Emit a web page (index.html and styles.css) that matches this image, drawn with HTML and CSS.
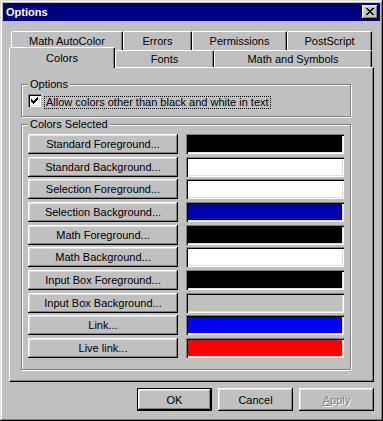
FILE: index.html
```html
<!DOCTYPE html>
<html>
<head>
<meta charset="utf-8">
<title>Options</title>
<link rel="stylesheet" href="styles.css">
</head>
<body>
<div class="window">
  <div class="titlebar">
    <span class="title">Options</span>
    <div class="close">
      <svg width="8" height="7" viewBox="0 0 8 7" shape-rendering="crispEdges"><path d="M0 0h2v1h-2zM6 0h2v1h-2zM1 1h2v1h-2zM5 1h2v1h-2zM2 2h4v1h-4zM3 3h2v1h-2zM2 4h4v1h-4zM1 5h2v1h-2zM5 5h2v1h-2zM0 6h2v1h-2zM6 6h2v1h-2z" fill="#000"/></svg>
    </div>
  </div>
  <div class="body">
    <div class="tabs-back">
      <div class="tab w-autocolor">Math AutoColor</div>
      <div class="tab w-errors">Errors</div>
      <div class="tab w-perm">Permissions</div>
      <div class="tab w-post">PostScript</div>
    </div>
    <div class="tabs-front">
      <div class="tab sel w-colors">Colors</div>
      <div class="tab w-fonts">Fonts</div>
      <div class="tab w-math">Math and Symbols</div>
    </div>
    <div class="panel">
      <div class="group group-opts">
        <span class="group-label">Options</span>
        <div class="check-row">
          <span class="checkbox">
            <svg width="7" height="7" viewBox="0 0 7 7" shape-rendering="crispEdges"><path d="M6 0h1v1h-1zM5 1h2v1h-2zM0 2h1v1h-1zM4 2h3v1h-3zM0 3h2v1h-2zM3 3h3v1h-3zM0 4h5v1h-5zM1 5h3v1h-3zM2 6h1v1h-1z" fill="#000"/></svg>
          </span>
          <span class="check-label">Allow colors other than black and white in text</span>
        </div>
      </div>
      <div class="group group-colors">
        <span class="group-label">Colors Selected</span>
        <div class="color-grid">
          <div class="btn">Standard Foreground...</div><div class="swatch c-black"></div>
          <div class="btn">Standard Background...</div><div class="swatch c-white"></div>
          <div class="btn">Selection Foreground...</div><div class="swatch c-white"></div>
          <div class="btn">Selection Background...</div><div class="swatch c-navy"></div>
          <div class="btn">Math Foreground...</div><div class="swatch c-black"></div>
          <div class="btn">Math Background...</div><div class="swatch c-white"></div>
          <div class="btn">Input Box Foreground...</div><div class="swatch c-black"></div>
          <div class="btn">Input Box Background...</div><div class="swatch c-gray"></div>
          <div class="btn">Link...</div><div class="swatch c-blue"></div>
          <div class="btn">Live link...</div><div class="swatch c-red"></div>
        </div>
      </div>
    </div>
    <div class="footer">
      <div class="btn fbtn default">OK</div>
      <div class="btn fbtn">Cancel</div>
      <div class="btn fbtn disabled"><span><u>A</u>pply</span></div>
    </div>
  </div>
</div>
</body>
</html>
```
FILE: styles.css
```css
* { box-sizing: border-box; }
html, body { margin: 0; padding: 0; }
body {
  background: #c0c0c0;
  font-family: "Liberation Sans", Arial, sans-serif;
  font-size: 11px;
  color: #000;
}
.window {
  width: 383px;
  height: 421px;
  padding: 3px;
  background: #c0c0c0;
  box-shadow: inset -1px -1px #000, inset 1px 1px #dfdfdf, inset -2px -2px #808080, inset 2px 2px #fff;
  display: flex;
  flex-direction: column;
}
.titlebar {
  height: 18px;
  background: #000080;
  color: #fff;
  font-weight: bold;
  display: flex;
  align-items: center;
  justify-content: space-between;
  padding: 0 2px 0 3px;
}
.close {
  width: 16px;
  height: 14px;
  background: #c0c0c0;
  box-shadow: inset -1px -1px #000, inset 1px 1px #fff, inset -2px -2px #808080, inset 2px 2px #dfdfdf;
  display: flex;
  align-items: center;
  justify-content: center;
  padding-bottom: 1px;
}
.close svg { display: block; }
.body {
  flex: 1;
  padding: 10px 6px 0;
  display: flex;
  flex-direction: column;
}
.tabs-back {
  display: flex;
  height: 19px;
  padding-left: 2px;
}
.tabs-front {
  display: flex;
  height: 17px;
  align-items: flex-end;
}
.tab {
  height: 100%;
  background: #c0c0c0;
  border-top: 1px solid #fff;
  border-left: 1px solid #fff;
  border-right: 1px solid #000;
  border-radius: 2px 2px 0 0;
  box-shadow: inset -1px 0 #808080;
  display: flex;
  align-items: center;
  justify-content: center;
}
.tabs-front .tab { height: 17px; }
.tabs-front .tab.sel {
  height: 21px;
  margin-bottom: -1px;
  position: relative;
  z-index: 1;
}
.w-autocolor { width: 112px; }
.w-errors { width: 69px; }
.w-perm { width: 95px; }
.w-post { width: 85px; }
.w-colors { width: 106px; }
.w-fonts { width: 99px; }
.w-math { width: 158px; }
.panel {
  height: 315px;
  border: 1px solid;
  border-color: #fff #000 #000 #fff;
  box-shadow: inset -1px -1px #808080;
  padding: 16px 22px 0 11px;
}
.group {
  position: relative;
  border: 1px solid #808080;
  box-shadow: inset 1px 1px #fff, 1px 1px #fff;
}
.group-label {
  position: absolute;
  top: -7px;
  left: 6px;
  padding: 0 2px;
  background: #c0c0c0;
  line-height: 13px;
}
.group-opts {
  height: 33px;
  padding: 9px 0 0 6px;
}
.check-row {
  display: flex;
  align-items: flex-start;
}
.checkbox {
  width: 13px;
  height: 13px;
  background: #fff;
  box-shadow: inset 1px 1px #808080, inset 2px 2px #000, inset -1px -1px #fff, inset -2px -2px #dfdfdf;
  display: flex;
  align-items: center;
  justify-content: center;
}
.checkbox svg { display: block; }
.check-label {
  margin-left: 3px;
  margin-top: 2px;
  border: 1px dotted #000;
  padding: 0 1px;
  line-height: 11px;
}
.group-colors {
  margin-top: 7px;
  height: 246px;
  padding: 9px 0 0 6px;
}
.color-grid {
  display: grid;
  grid-template-columns: 150px 158px;
  grid-auto-rows: 20px;
  column-gap: 8px;
  row-gap: 2.67px;
}
.btn {
  background: #c0c0c0;
  box-shadow: inset -1px -1px #000, inset 1px 1px #fff, inset -2px -2px #808080, inset 2px 2px #dfdfdf;
  display: flex;
  align-items: center;
  justify-content: center;
}
.swatch {
  box-shadow: inset 1px 1px #808080, inset 2px 2px #000, inset -1px -1px #fff, inset -2px -2px #dfdfdf;
}
.c-black { background: #000; }
.c-white { background: #fff; }
.c-navy { background: #0000a8; }
.c-gray { background: #c0c0c0; }
.c-blue { background: #0000ff; }
.c-red { background: #ff0000; }
.footer {
  display: flex;
  justify-content: flex-end;
  gap: 6px;
  margin-top: 6px;
}
.fbtn {
  width: 75px;
  height: 23px;
}
.fbtn.default {
  border: 1px solid #000;
}
.fbtn.disabled {
  color: #808080;
  text-shadow: 1px 1px #fff;
}
.fbtn.disabled u { text-decoration-color: #808080; }
```
